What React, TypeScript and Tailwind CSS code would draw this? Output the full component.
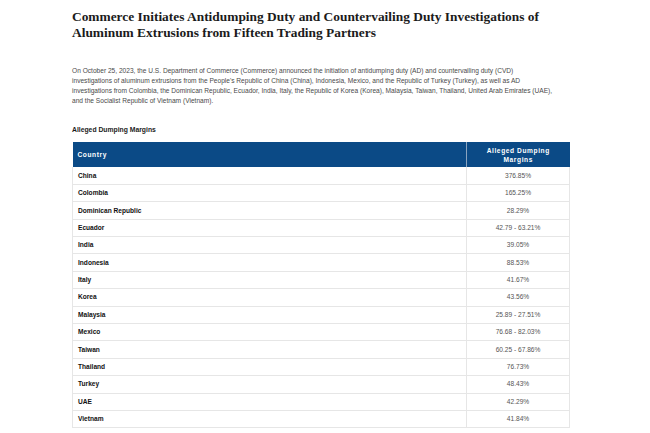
import React from "react";

const rows: [string, string][] = [
  ["China", "376.85%"],
  ["Colombia", "165.25%"],
  ["Dominican Republic", "28.29%"],
  ["Ecuador", "42.79 - 63.21%"],
  ["India", "39.05%"],
  ["Indonesia", "88.53%"],
  ["Italy", "41.67%"],
  ["Korea", "43.56%"],
  ["Malaysia", "25.89 - 27.51%"],
  ["Mexico", "76.68 - 82.03%"],
  ["Taiwan", "60.25 - 67.86%"],
  ["Thailand", "76.73%"],
  ["Turkey", "48.43%"],
  ["UAE", "42.29%"],
  ["Vietnam", "41.84%"],
];

export default function App() {
  return (
    <div className="w-[650px] h-[433px] bg-white overflow-hidden">
      <div className="w-[498px] ml-[72px] pt-[9px]">
        {/* Titulo */}
        <h1 className="font-['Liberation_Serif',serif] font-bold text-[#1b1b1b] text-[13.4px] leading-[16px] whitespace-nowrap">
          Commerce Initiates Antidumping Duty and Countervailing Duty Investigations of
          <br />
          Aluminum Extrusions from Fifteen Trading Partners
        </h1>

        <p className="mt-[25px] w-[482px] font-['Liberation_Sans',sans-serif] text-[6.6px] leading-[10px] text-[#4a4a4a]">
          On October 25, 2023, the U.S. Department of Commerce (Commerce) announced the initiation of antidumping duty (AD) and countervailing duty (CVD) investigations of aluminum extrusions from the People's Republic of China (China), Indonesia, Mexico, and the Republic of Turkey (Turkey), as well as AD investigations from Colombia, the Dominican Republic, Ecuador, India, Italy, the Republic of Korea (Korea), Malaysia, Taiwan, Thailand, United Arab Emirates (UAE), and the Socialist Republic of Vietnam (Vietnam).
        </p>

        <p className="mt-[19px] font-['Liberation_Sans',sans-serif] font-bold text-[6.8px] leading-[10px] text-[#1b1b1b]">
          Alleged Dumping Margins
        </p>

        {/* Tabla */}
        <table className="mt-[7px] w-full border-collapse font-['Liberation_Sans',sans-serif] text-[6.6px]">
          <thead>
            <tr className="bg-[#0b4a86] text-white h-[25px]">
              <th className="text-left font-bold tracking-[0.6px] pl-[5px] border-r border-[#8aa4c0]">
                Country
              </th>
              <th className="w-[103px] font-bold tracking-[0.6px] leading-[9px] text-center">
                Alleged Dumping
                <br />
                Margins
              </th>
            </tr>
          </thead>
          <tbody>
            {rows.map(([country, margin]) => (
              <tr key={country} className="h-[17.4px] border-b border-[#e6e6e6]">
                <td className="pl-[5px] font-bold text-[#111] border-l border-r border-[#e6e6e6]">
                  {country}
                </td>
                <td className="text-center text-[#555] border-r border-[#e6e6e6]">
                  {margin}
                </td>
              </tr>
            ))}
          </tbody>
        </table>
      </div>
    </div>
  );
}
